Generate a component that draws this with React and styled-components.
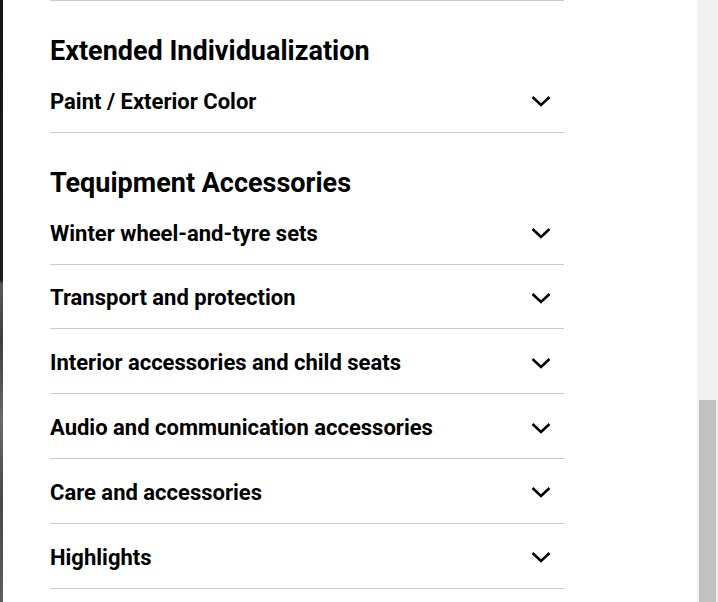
import React from "react";
import styled, { createGlobalStyle } from "styled-components";

const Global = createGlobalStyle`
  html, body { margin: 0; padding: 0; background: #fff; }
  body { font-family: Roboto, "Liberation Sans", sans-serif; color: #000; overflow: hidden; }
`;

const Frame = styled.div`
  display: flex;
  width: 718px;
  height: 602px;
  overflow: hidden;
`;

const Backdrop = styled.div`
  width: 3px;
  flex: none;
  background: linear-gradient(
    to bottom,
    #161616 0,
    #1c1c1c 280px,
    #5a5a5a 284px,
    #3e3e3e 340px,
    #6a6a6a 420px,
    #484848 500px,
    #5e5e5e 602px
  );
`;

const Panel = styled.div`
  flex: 1;
  padding-left: 47px;
  background: #fff;
`;

const Content = styled.div`
  width: 514px;
  border-top: 1px solid #c9cacb;
`;

const Section = styled.section`
  padding-top: 32px;
`;

const Heading = styled.h2`
  margin: 0;
  height: 35px;
  line-height: 36px;
  font-size: 27px;
  font-weight: 700;
  letter-spacing: 0;
`;

const Row = styled.div`
  display: flex;
  align-items: center;
  justify-content: space-between;
  height: 63.8px;
  box-sizing: content-box;
  border-bottom: 1px solid #c9cacb;
`;

const Label = styled.span`
  font-size: 22px;
  font-weight: 700;
  line-height: 28px;
  padding-top: 4px;
`;

const Chevron = styled.svg`
  width: 22px;
  height: 14px;
  margin-right: 12px;
  margin-top: 3px;
  flex: none;
`;

const Track = styled.div`
  width: 21px;
  flex: none;
  background: #f1f1f1;
  display: flex;
  justify-content: center;
`;

const Thumb = styled.div`
  width: 17px;
  margin-top: 400px;
  height: 202px;
  background: #c1c1c1;
`;

const ChevronIcon = () => (
  <Chevron viewBox="0 0 22 14" aria-hidden="true">
    <path d="M2.5 3 L11 11 L19.5 3" fill="none" stroke="#000" strokeWidth="2.5" />
  </Chevron>
);

const sections = [
  { title: "Extended Individualization", items: ["Paint / Exterior Color"] },
  {
    title: "Tequipment Accessories",
    items: [
      "Winter wheel-and-tyre sets",
      "Transport and protection",
      "Interior accessories and child seats",
      "Audio and communication accessories",
      "Care and accessories",
      "Highlights",
    ],
  },
];

export default function App() {
  return (
    <>
      <Global />
      <Frame>
        <Backdrop />
        <Panel>
          <Content>
            {sections.map((s) => (
              <Section key={s.title}>
                <Heading>{s.title}</Heading>
                {s.items.map((it) => (
                  <Row key={it}>
                    <Label>{it}</Label>
                    <ChevronIcon />
                  </Row>
                ))}
              </Section>
            ))}
          </Content>
        </Panel>
        <Track>
          <Thumb />
        </Track>
      </Frame>
    </>
  );
}
